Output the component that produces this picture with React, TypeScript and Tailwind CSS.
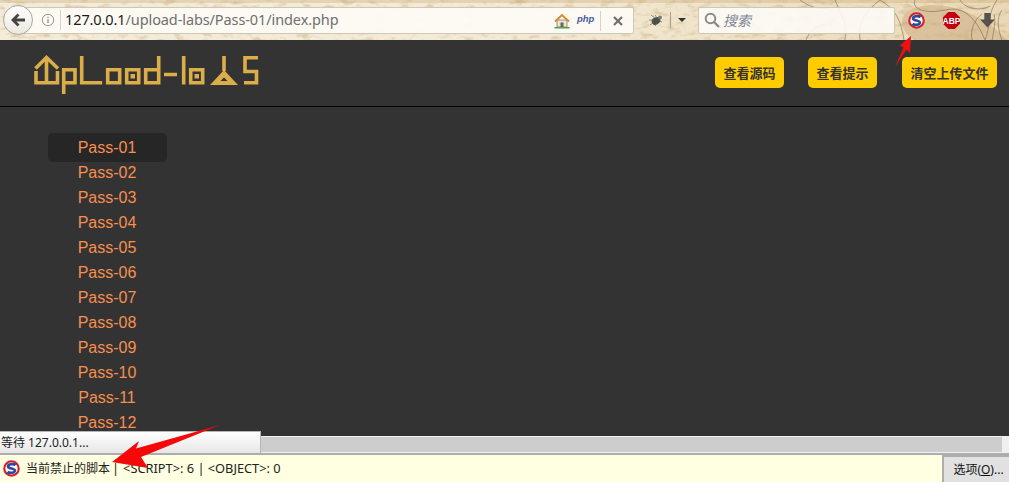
import React from 'react';

const passes = ['Pass-01', 'Pass-02', 'Pass-03', 'Pass-04', 'Pass-05', 'Pass-06', 'Pass-07', 'Pass-08', 'Pass-09', 'Pass-10', 'Pass-11', 'Pass-12'];
const buttons = ['查看源码', '查看提示', '清空上传文件'];

const NoScriptIcon: React.FC<{ className: string }> = ({ className }) => (
  <svg viewBox="0 0 16 16" className={className}>
    <circle cx="8" cy="8" r="6.800" fill="#fff" stroke="#d1202a" strokeWidth="2" />
    <path d="M11.800 4.800C10 3.400 5.200 3.600 4.800 6 4.500 8.500 11.500 7.500 11.200 10 10.800 12.400 6 12.600 4.200 11.200" fill="none" stroke="#2b4a9b" strokeWidth="2.600" />
  </svg>
);

// upload-labs logo, built from the same thick bars as the original artwork
const Logo: React.FC = () => (
  <svg viewBox="0 0 226 40" className="w-[226px] h-[40px]" fill="none" stroke="#dcae4a" strokeWidth="3.600" aria-label="upload-labs">
    <path d="M1.500 13.500 12.500 2.500 24 13.500M12.500 2v27.300M2 16v11.700h21.500V16" />
    <path d="M29.700 39V14.700h11.300v13H29.700" />
    <path d="M47.700 1v26.700h20.500" />
    <path d="M73.700 14.700h12v13h-12zM92.700 14.700h12v13h-12z" />
    <path d="M124.700 1v26.700h-13v-13h13" />
    <path d="M130 19.500h13M149.700 1v28.500" />
    <path d="M156.700 14.700h12v13h-12z" />
    <path d="M190 1v15" />
    <path d="M211 2.700h13M211 1v15.500h11.500v11.200H210" />
    <rect x="96.500" y="19" width="4.500" height="4.500" fill="#dcae4a" stroke="none" />
    <rect x="160.500" y="19" width="4.500" height="4.500" fill="#dcae4a" stroke="none" />
    <path d="M190 15 176 30h28z" fill="#dcae4a" stroke="none" />
    <path d="M190 22.500 186.500 26h7z" fill="#333" stroke="none" />
  </svg>
);

const App: React.FC = () => {
  return (
    <div className="relative w-[1009px] h-[482px] overflow-hidden flex flex-col font-['Liberation_Sans',sans-serif]">
      {/* Browser toolbar */}
      <div className="relative isolate h-10 shrink-0 flex items-center bg-gradient-to-r from-[#f4ecdb] via-[#f3ead6] to-[#ead9b8]">
        <svg className="absolute inset-0 -z-10 w-full h-full" viewBox="0 0 1009 40">
          <filter id="parch">
            <feTurbulence type="fractalNoise" baseFrequency="0.08 0.18" numOctaves="4" seed="7" />
            <feColorMatrix values="0 0 0 0 0.62  0 0 0 0 0.46  0 0 0 0 0.24  0 0 0 1.800 -0.900" />
          </filter>
          <rect width="1009" height="40" filter="url(#parch)" />
          <rect width="1009" height="3" fill="#c9a873" opacity="0.35" />
          <path d="M905 14c14-14 46-10 66 0s24 14 36 26H914c-12-8-15-18-9-26z" fill="#c8aa7c" opacity="0.5" />
          <g fill="none" stroke="#7d6443" strokeWidth="0.900" opacity="0.65">
            <path d="M800 0c8 6 18 10 28 8M835 0c8 18 12 24 10 40M860 40c-2-16 4-28 20-40M880 0c12 8 20 14 24 40M915 0c-4 10 12 14 30 10s30 6 40 30M960 0c4 8 20 12 30 6M985 40c6-14 2-26 12-40M1002 10c-6 8-4 20 0 30" />
            <path d="M806 40c4-10 10-14 20-16M972 40c-2-10 2-20 10-26M992 40c2-10 4-18 2-26" />
          </g>
        </svg>

        <button className="relative z-10 ml-[3px] w-[30px] h-[30px] shrink-0 rounded-full border border-[#aaa69c] bg-gradient-to-b from-white to-[#ece8df] flex items-center justify-center">
          <svg viewBox="0 0 16 16" className="w-[16px] h-[16px]" fill="none" stroke="#444" strokeWidth="2.800">
            <path d="M8.500 2.500 3 8l5.500 5.500M3.500 8H15" />
          </svg>
        </button>
        <div className="relative -ml-[14px] w-[615px] h-[27px] flex items-center border border-[#cfc7b5] bg-[#fdfbf6]/95 rounded-r-[2px]">
          <svg viewBox="0 0 16 16" className="ml-[21px] w-[14px] h-[14px] shrink-0" fill="none" stroke="#8e8e8e" strokeWidth="1.100">
            <circle cx="8" cy="8" r="6.500" />
            <path d="M8 7v4.500M8 4.200v1.400" strokeWidth="1.500" />
          </svg>
          <div className="ml-[5px] w-px h-[20px] bg-[#d6d2c8]" />
          <div className="ml-[4px] text-[14.500px] text-[#6f6f6f] font-['Noto_Sans',sans-serif] whitespace-nowrap tracking-[-0.1px]">
            <span className="text-[#1a1a1a]">127.0.0.1</span>/upload-labs/Pass-01/index.php
          </div>
          <svg viewBox="0 0 16 16" className="absolute left-[534px] top-[5px] w-[16px] h-[16px]">
            <path d="M3 14V7h10v7z" fill="#e9e5da" stroke="#8b7a5a" strokeWidth="0.800" />
            <path d="M1 8.500 8 2l7 6.500" fill="none" stroke="#d98a2b" strokeWidth="2" />
            <rect x="6.500" y="9.500" width="3" height="4.500" fill="#6e6252" />
            <rect x="0.500" y="14" width="15" height="1.500" fill="#4fa046" />
          </svg>
          <span className="absolute left-[557px] top-[4px] text-[9.500px] font-bold italic text-[#4a5a9c]">php</span>
          <div className="absolute left-[580px] top-[3px] w-px h-[20px] bg-[#d6d2c8]" />
          <svg viewBox="0 0 10 10" className="absolute left-[593px] top-[8px] w-[10px] h-[10px]" stroke="#6e6e6e" strokeWidth="2.200">
            <path d="M1 1l8 8M9 1 1 9" />
          </svg>
        </div>

        <svg viewBox="0 0 16 16" className="ml-[14px] w-[16px] h-[16px] shrink-0">
          <ellipse cx="8" cy="9" rx="4.500" ry="3.500" fill="#4d4d48" transform="rotate(-25 8 9)" />
          <circle cx="12" cy="5.500" r="2" fill="#7c7c76" />
          <path d="M3 3l4 3M7 3l2 3M2 13l4-3M7 14l2-3M14 10l-3-1M1 8h4" stroke="#6c6c66" strokeWidth="0.800" />
        </svg>
        <div className="ml-[6px] w-px h-[16px] bg-[#a89f8c]" />
        <div className="ml-[7px] w-0 h-0 border-x-[4px] border-x-transparent border-t-[4px] border-t-[#333]" />

        <div className="ml-[12px] w-[197px] h-[27px] flex items-center border border-[#cfc7b5] bg-[#fdfbf6]/90 rounded-[2px]">
          <svg viewBox="0 0 16 16" className="ml-[5px] w-[16px] h-[16px]" fill="none" stroke="#8a8a8a" strokeWidth="2">
            <circle cx="6.500" cy="6.500" r="4.800" />
            <path d="M10 10l5 5" strokeWidth="2.400" />
          </svg>
          <span className="ml-[3px] text-[14px] italic text-[#7d8699] font-['Noto_Sans_CJK_SC',sans-serif]">搜索</span>
        </div>

        <NoScriptIcon className="ml-[13px] w-[17px] h-[17px] shrink-0" />
        <svg viewBox="0 0 16 16" className="ml-[18px] w-[17px] h-[17px] shrink-0">
          <path d="M5 0h6l5 5v6l-5 5H5l-5-5V5z" fill="#c30012" />
          <text x="8" y="11" textAnchor="middle" fontSize="8" fontWeight="700" fill="#fff" fontFamily="Liberation Sans">ABP</text>
        </svg>
        <svg viewBox="0 0 16 16" className="ml-[19px] w-[17px] h-[17px] shrink-0" fill="#55524c">
          <path d="M5 1h6v6h4l-7 7.500L1 7h4z" />
        </svg>
      </div>

      {/* Page */}
      <div className="flex-1 min-h-0 overflow-hidden bg-[#333333]">
        <div className="h-[67px] border-b border-black flex items-center pl-[34px] pr-[12px]">
          <div className="mt-[3px]"><Logo /></div>
          <div className="ml-auto flex gap-[24px] -mt-[1px]">
            {buttons.map((b, i) => (
              <button
                key={b}
                className={
                  i === 2
                    ? 'ml-[1px] h-[31px] px-[8.500px] rounded-[5px] bg-[#ffcc00] text-[#333] text-[13px] font-bold font-["Noto_Sans_CJK_SC",sans-serif]'
                    : 'h-[31px] px-[8.500px] rounded-[5px] bg-[#ffcc00] text-[#333] text-[13px] font-bold font-["Noto_Sans_CJK_SC",sans-serif]'
                }
              >
                {b}
              </button>
            ))}
          </div>
        </div>
        <ul className="mt-[28px] ml-[48px] w-[119px]">
          {passes.map((p, i) => (
            <li
              key={p}
              className={
                i === 0
                  ? 'h-[29px] -my-[2px] pr-[1px] leading-[30px] text-center text-[16px] text-[#f68f50] bg-[#262626] rounded-[5px]'
                  : 'h-[25px] pr-[1px] leading-[25px] text-center text-[16px] text-[#f68f50]'
              }
            >
              {p}
            </li>
          ))}
        </ul>
      </div>

      {/* Horizontal scrollbar */}
      <div className="h-[17px] shrink-0 bg-[#f0f0f0] pt-px pr-[7px] pb-px">
        <div className="h-full bg-[#cdcdcd]" />
      </div>

      {/* NoScript notification bar */}
      <div className="h-[29px] shrink-0 flex items-center border-t-2 border-[#adadad] bg-[#ffffe1] text-[12px] text-[#222] font-['Noto_Sans','Noto_Sans_CJK_SC',sans-serif]">
        <NoScriptIcon className="ml-[3px] w-[17px] h-[17px] shrink-0" />
        <span className="ml-[6px] whitespace-pre">当前禁止的脚本</span>
        <span className="ml-[2px] text-[12.800px] whitespace-pre">|</span>
        <span className="ml-[4px] text-[12.800px] whitespace-pre">&lt;SCRIPT&gt;: 6 | &lt;OBJECT&gt;: 0</span>
        <button className="ml-auto w-[67px] h-full pl-[4px] border-l-2 border-t-2 border-[#adadad] bg-[#e1e1e1] text-[12px] text-[#111]">
          选项(<span className="underline">O</span>)...
        </button>
      </div>

      {/* Status tooltip */}
      <div className="absolute left-0 top-[431px] w-[261px] h-[22px] pl-px leading-[22px] text-[12px] text-[#222] border-t border-r border-[#b5b5b5] bg-gradient-to-b from-white to-[#e6e6e6] font-['Noto_Sans','Noto_Sans_CJK_SC',sans-serif]">
        等待 127.0.0.1...
      </div>

      {/* Red annotation arrows */}
      <svg className="absolute inset-0 w-full h-full pointer-events-none" viewBox="0 0 1009 482">
        <path d="M911 36 910 53 906.500 49.500 895 67 903.500 47.500 900 45.500z" fill="#ee1111" />
        <path d="M112 462 139 441 136 448.500 220 425 141 457 148 468z" fill="#f40808" />
      </svg>
    </div>
  );
};

export default App;
